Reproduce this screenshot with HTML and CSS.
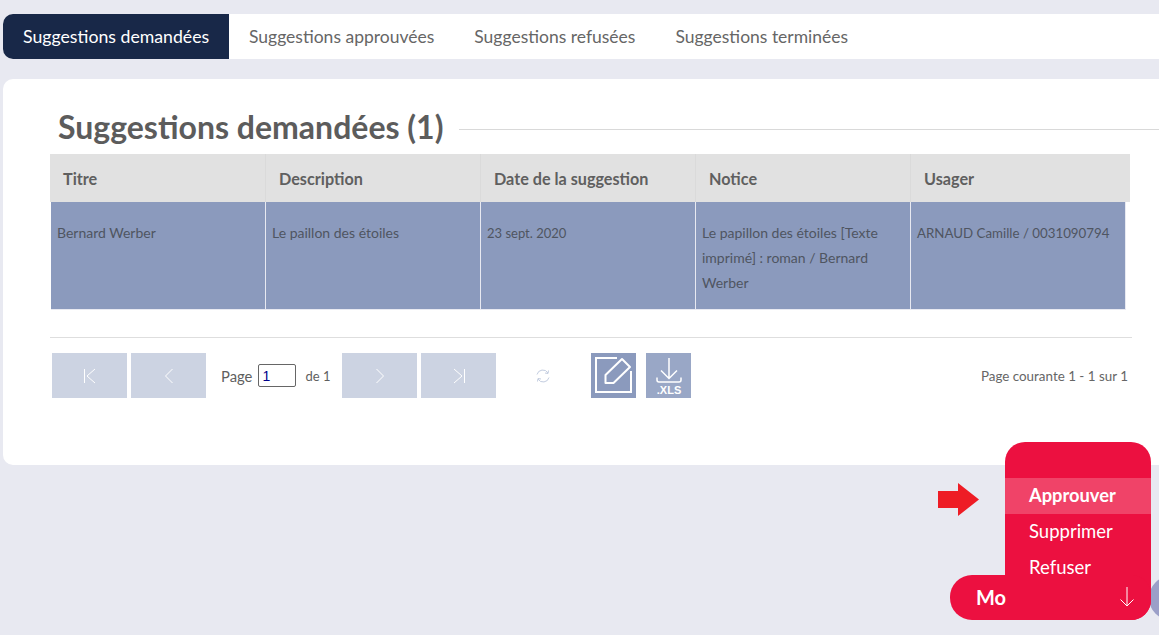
FILE: index.html
```html
<!DOCTYPE html>
<html lang="fr">
<head>
<meta charset="utf-8">
<title>Suggestions</title>
<link rel="stylesheet" href="styles.css">
</head>
<body>
<nav class="tabs">
  <a class="tab active">Suggestions demandées</a>
  <a class="tab">Suggestions approuvées</a>
  <a class="tab">Suggestions refusées</a>
  <a class="tab">Suggestions terminées</a>
</nav>
<main class="panel">
  <div class="heading">
    <h1>Suggestions demandées (1)</h1>
    <span class="rule"></span>
  </div>
  <div class="table">
    <div class="thead">
      <div class="th w1">Titre</div>
      <div class="th w2">Description</div>
      <div class="th w3">Date de la suggestion</div>
      <div class="th w4">Notice</div>
      <div class="th w5">Usager</div>
    </div>
    <div class="row">
      <div class="td">Bernard Werber</div>
      <div class="td">Le paillon des étoiles</div>
      <div class="td date">23 sept. 2020</div>
      <div class="td">Le papillon des étoiles [Texte imprimé] : roman / Bernard Werber</div>
      <div class="td last">ARNAUD Camille / 0031090794</div>
    </div>
  </div>
  <div class="sep"></div>
  <div class="pager">
    <button class="pg"><svg width="16" height="16" viewBox="0 0 16 16"><path d="M2.5 1v14M13 1 5 8l8 7" /></svg></button>
    <button class="pg"><svg width="16" height="16" viewBox="0 0 16 16"><path d="M11.5 1 4.500 8l7 7" /></svg></button>
    <span class="label first">Page</span>
    <input class="pageinput" value="1">
    <span class="label second">de 1</span>
    <button class="pg"><svg width="16" height="16" viewBox="0 0 16 16"><path d="m4.500 1 7 7-7 7" /></svg></button>
    <button class="pg"><svg width="16" height="16" viewBox="0 0 16 16"><path d="m3 1 8 7-8 7M13.500 1v14" /></svg></button>
    <svg class="refresh" width="16" height="16" viewBox="0 0 16 16"><path d="M2 6.500A6 6 0 0 1 13 5M14 9.500A6 6 0 0 1 3 11M13.500 2.500 13 5.500l-3-.5M2.500 13.500 3 10.500l3 .5" /></svg>
    <button class="action edit"><svg width="45" height="45" viewBox="0 0 45 45"><path class="thick" d="M26 5H5v34h35V18" /><path class="thick pencil" d="M31 6 39 14 22.500 30H14.500V22Z" /></svg></button>
    <button class="action xls"><svg width="45" height="45" viewBox="0 0 45 45"><path class="thin2" d="M23 5v20M15 17.500l8 8 8-8M11 24.500v2.500a2 2 0 0 0 2 2h20a2 2 0 0 0 2-2v-2.500" /><text x="23" y="40.500" class="xlstext">.XLS</text></svg></button>
    <span class="count">Page courante 1 - 1 sur 1</span>
  </div>
</main>
<div class="arrow"><svg width="41" height="33" viewBox="0 0 41 33"><path d="M0 8h20V0l21 16.500-21 16.500V25H0Z"/></svg></div>
<span class="bubble"></span>
<div class="fab">
  <div class="menu">
    <a class="item hover">Approuver</a>
    <a class="item">Supprimer</a>
    <a class="item">Refuser</a>
  </div>
  <div class="modebar">
    <span class="mo">Mo</span>
    <svg class="down" width="16" height="22" viewBox="0 0 16 22"><path d="M8 1v19M1.500 13.500 8 20l6.500-6.500"/></svg>
  </div>
</div>
</body>
</html>
```
FILE: styles.css
```css
* { box-sizing: border-box; }
html, body { margin: 0; height: 100%; }
body {
  position: relative;
  height: 635px;
  overflow: hidden;
  background: #e8e9f1;
  color: #5f5f5f;
  font-family: "Lato", "Open Sans", sans-serif;
  padding: 14px 0 0 3px;
}
.tabs {
  display: flex;
  height: 45px;
  background: #fff;
  border-radius: 10px 0 0 10px;
}
.tab {
  display: flex;
  align-items: center;
  padding: 0 20px 1px;
  font-size: 17.5px;
  color: #666;
}
.tab.active {
  width: 226px;
  background: #182848;
  color: #fff;
  font-size: 17.7px;
  border-radius: 10px 0 0 10px;
  white-space: nowrap;
}
.panel {
  margin-top: 20px;
  height: 386px;
  background: #fff;
  border-radius: 10px 0 0 10px;
  padding: 29px 0 0 47px;
}
.heading { display: flex; align-items: center; height: 46px; padding: 0 0 10px 8px; }
.heading h1 { margin: 0; font-size: 32px; font-weight: 700; color: #5c5c5c; white-space: nowrap; }
.rule { flex: 1; height: 1px; background: #d9d9d9; margin: 6px 0 0 16px; }
.table { width: 1080px; }
.thead { display: flex; height: 48px; background: #e1e1e1; }
.th {
  display: flex; align-items: center;
  padding: 0 0 0 13px;
  font-size: 16.2px; font-weight: 700; color: #5f5f5f;
  border-right: 1px solid #dadada;
}
.th.w1 { width: 216px; }
.th.w2 { width: 215px; }
.th.w3 { width: 215px; }
.th.w4 { width: 215px; }
.th.w5 { flex: 1; border-right: 0; }
.row {
  display: grid;
  grid-template-columns: 215px 215px 215px 215px 215px;
  width: 1075px;
  margin-left: 1px;
  height: 108px;
  background: #8b9abd;
  border-bottom: 1px solid #e8e9f1;
}
.td {
  padding: 18px 6px 0;
  font-size: 14px;
  line-height: 25px;
  color: #4f5561;
  border-right: 1px solid #e8e9f1;
}
.td.date { padding-top: 19px; font-size: 13px; }
.td.last { padding-top: 19px; white-space: nowrap; font-size: 13.3px; }
.sep { width: 1082px; height: 1px; background: #dedede; margin-top: 27px; }
.pager { display: flex; align-items: center; margin: 15px 0 0 2px; width: 1076px; height: 45px; font-size: 13px; }
.pg {
  width: 75px; height: 45px; margin-right: 4px;
  border: 0; padding: 0; background: #ccd3e2;
  display: flex; align-items: center; justify-content: center;
}
.pg svg { fill: none; stroke: #fff; stroke-width: 1; }
.label.first { font-size: 14.8px; margin: 0 6px 0 11px; }
.label.second { margin: 0 12px 0 9px; }
.pageinput {
  width: 38px; height: 23px; padding: 0 3px;
  border: 1px solid #666; border-radius: 2px;
  font: 14px "Liberation Sans", sans-serif; color: #00008b;
}
.refresh { margin: 0 40px 0 35px; fill: none; stroke: #c3cde0; stroke-width: 1; }
.action { width: 45px; height: 45px; border: 0; padding: 0; display: block; }
.action.edit { background: #8b9abd; margin-right: 10px; }
.action.xls { background: #99a7c6; }
.thick { fill: none; stroke: #fff; stroke-width: 2; }
.pencil { stroke-linejoin: round; }
.thin2 { fill: none; stroke: #fff; stroke-width: 1.500; }
.xlstext { fill: #fff; font: 700 11px "Liberation Sans", sans-serif; text-anchor: middle; }
.count { margin-left: auto; font-size: 13.4px; color: #666; }
.arrow { position: absolute; left: 938px; top: 483px; line-height: 0; }
.arrow path { fill: #ee1c25; }
.bubble { position: absolute; left: 1149px; top: 576px; width: 44px; height: 44px; border-radius: 50%; background: #9b9fc8; }
.fab { position: absolute; left: 950px; top: 442px; width: 201px; height: 178px; }
.menu {
  position: absolute; left: 55px; top: 0; width: 146px; height: 178px;
  padding-top: 36px;
  background: #ec1040; border-radius: 20px;
}
.item { display: flex; align-items: center; height: 36px; padding: 0 0 3px 24px; font-size: 18.5px; color: #fff; }
.item.hover { background: #f04368; font-weight: 700; font-size: 18.3px; }
.modebar {
  position: absolute; left: 0; top: 133px; width: 201px; height: 45px;
  background: #ec1040; border-radius: 22px 20px 20px 22px;
  display: flex; align-items: center; justify-content: space-between;
  padding: 0 16px 2px 26px;
}
.mo { font-size: 20px; font-weight: 700; color: #fff; }
.down { fill: none; stroke: #fff; stroke-width: 1; }
```
